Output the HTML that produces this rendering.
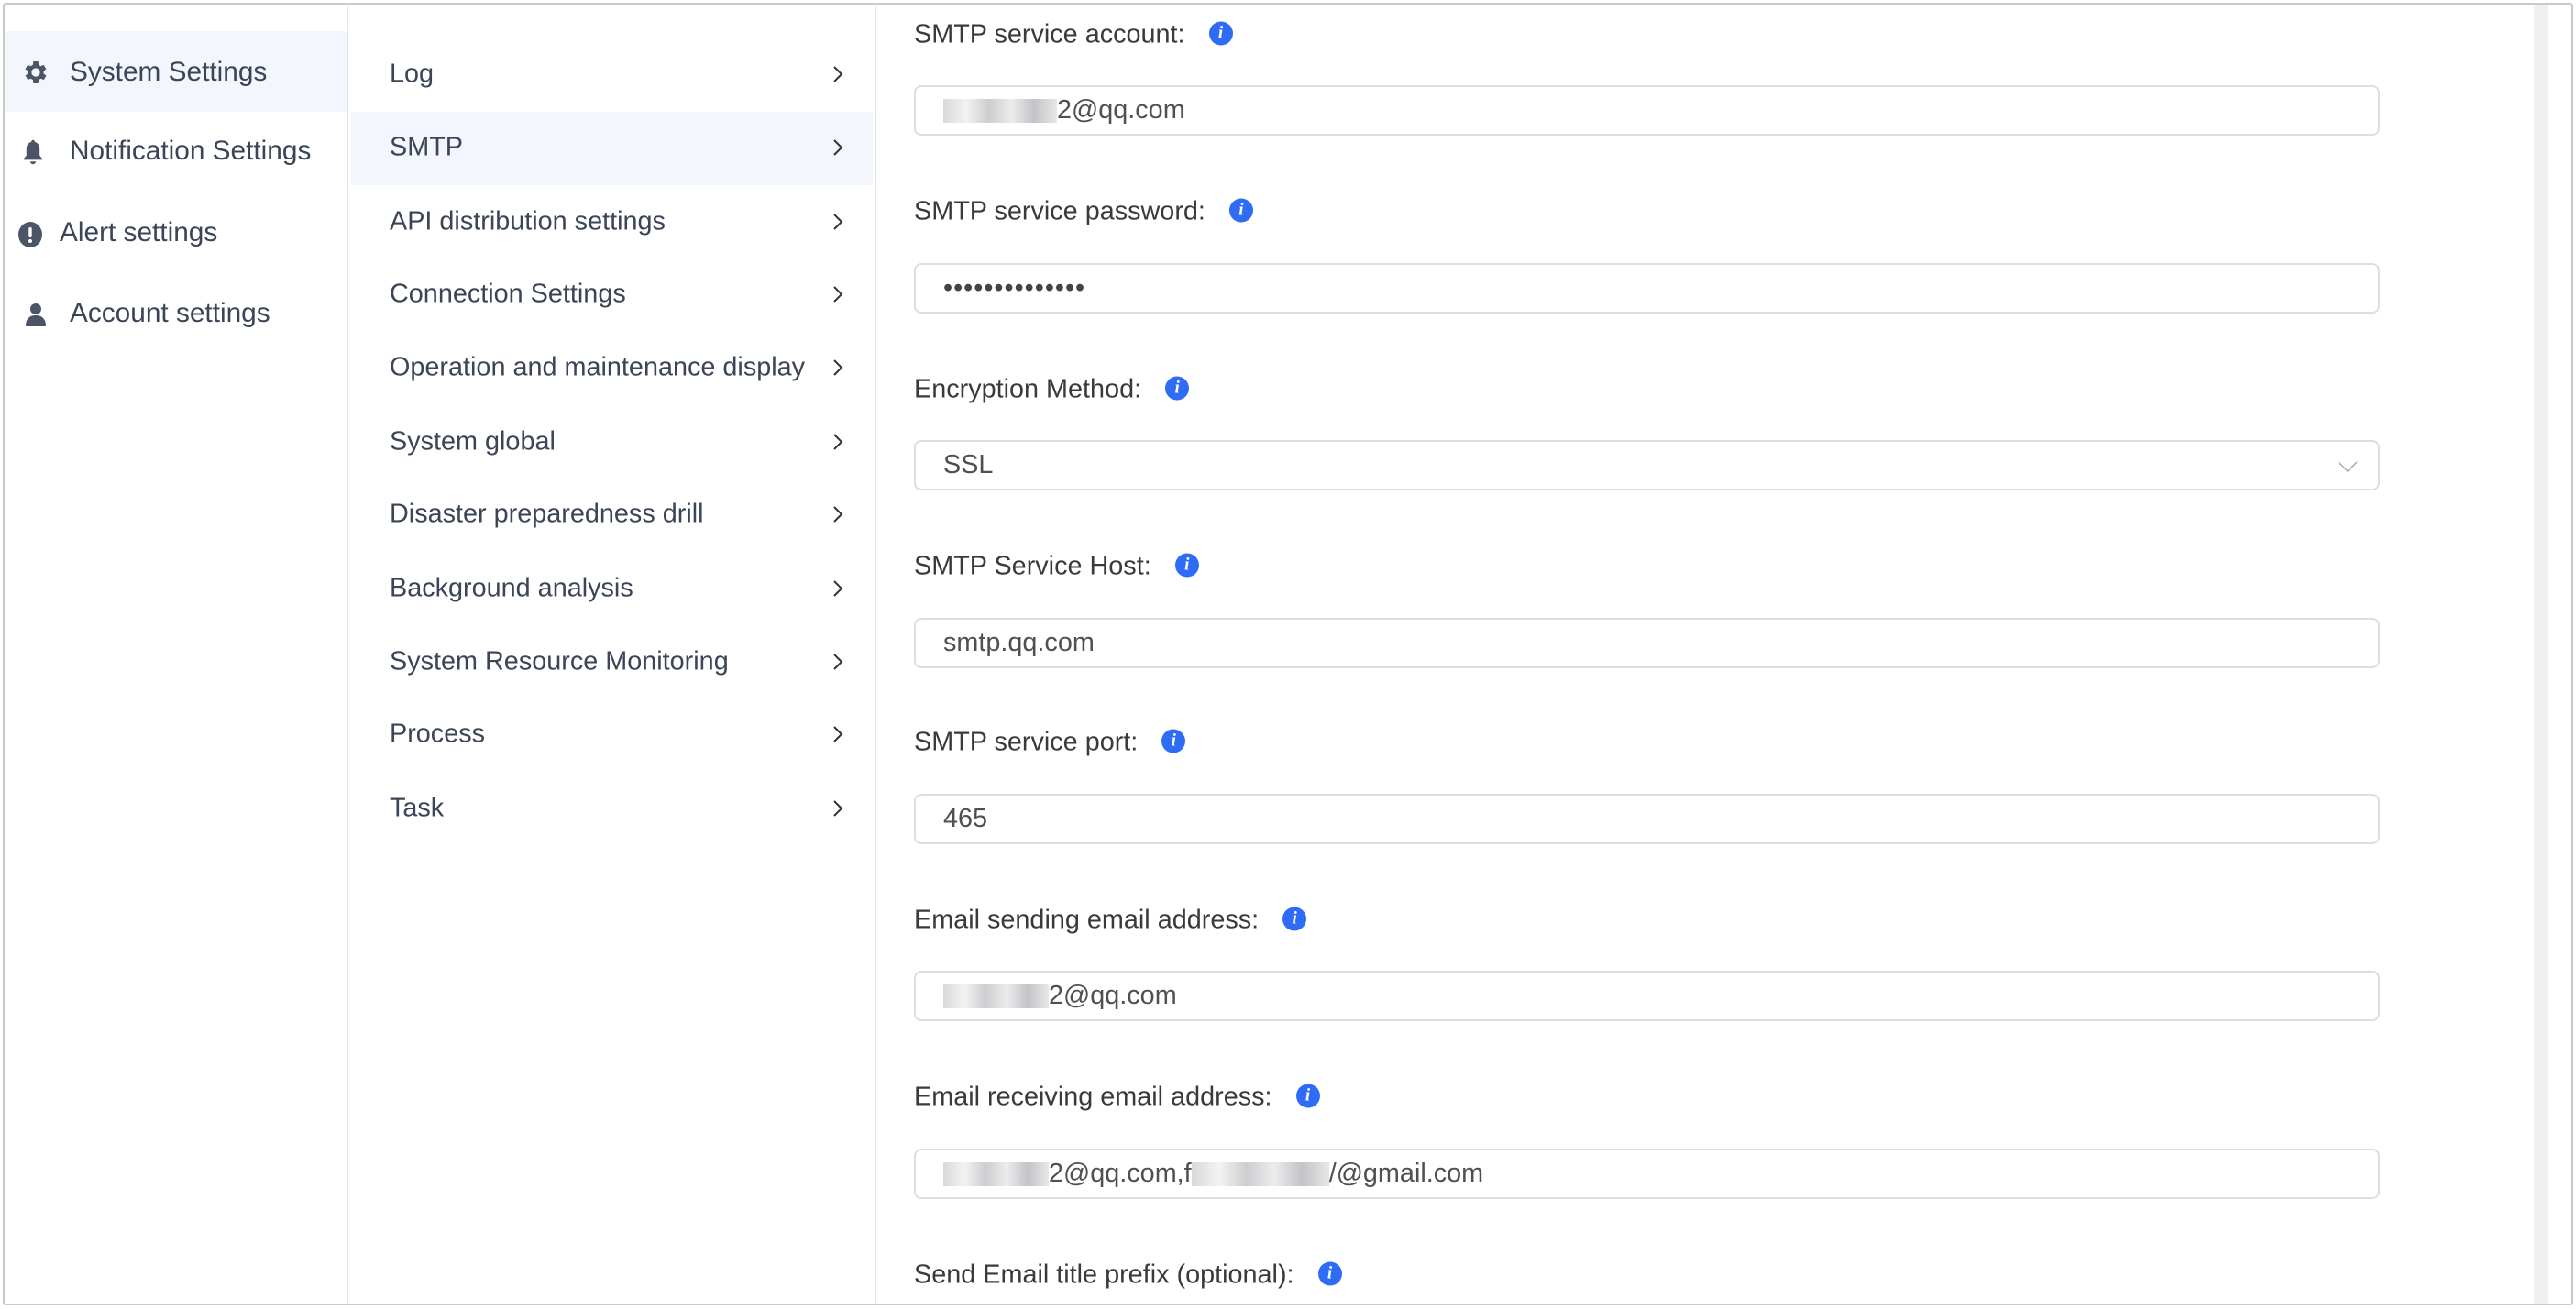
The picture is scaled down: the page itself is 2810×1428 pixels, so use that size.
<!DOCTYPE html>
<html><head><meta charset="utf-8"><style>
*{margin:0;padding:0;box-sizing:border-box}
body{width:2810px;height:1428px;background:#fff;font-family:"Liberation Sans",sans-serif;position:relative;overflow:hidden}
.frame{position:absolute;left:3px;top:3px;width:2804px;height:1421px;border:2px solid #c9c9c9;border-radius:3px}
.vl{position:absolute;top:4px;bottom:5px;width:2px;background:#e6e6ea}
.side{position:absolute;left:76px;font-size:29.8px;color:#3b4557;transform:translateY(-50%)}
.ico{position:absolute;transform:translate(-50%,-50%)}
.mi{position:absolute;left:425px;font-size:28.8px;color:#3b4557;transform:translateY(-50%)}
.chev{position:absolute;left:908px;transform:translateY(-50%)}
.lab{position:absolute;left:997px;font-size:28.8px;color:#3a3a3a;transform:translateY(-50%);white-space:nowrap}
.info{display:inline-block;width:26px;height:26px;border-radius:50%;background:#2f6cf6;color:#fff;font:italic bold 19px "Liberation Serif",serif;text-align:center;line-height:26px;margin-left:26px;vertical-align:middle;position:relative;top:-2px}
.inp{position:absolute;left:997px;width:1599px;height:55px;border:2px solid #dddde2;border-radius:8px;font-size:28.8px;color:#505050;padding-left:30px;line-height:51px;white-space:nowrap}
.blur{display:inline-block;height:26px;background:linear-gradient(90deg,#c8c8cc,#eee 20%,#b8b8bc 40%,#e4e4e6 60%,#aaaab0 80%,#ddd);vertical-align:middle;opacity:.7}
</style></head><body>
<div class="frame"></div>
<div style="position:absolute;left:5px;top:34px;width:373px;height:88px;background:#f3f6fd"></div>
<div style="position:absolute;left:383px;top:122px;width:569px;height:80px;background:#f3f6fd"></div>
<div class="vl" style="left:378px"></div>
<div class="vl" style="left:954px"></div>
<div style="position:absolute;left:2764px;top:5px;width:16px;height:1418px;background:#f0f0f0"></div>

<svg class="ico" style="left:39px;top:79px" width="32" height="32" viewBox="0 0 24 24"><path fill="#4b5567" d="M19.4 13a7.5 7.5 0 0 0 0-2l2.1-1.6-2-3.5-2.5 1a7 7 0 0 0-1.7-1L15 3h-4l-.4 2.9a7 7 0 0 0-1.7 1l-2.5-1-2 3.5L6.6 11a7.5 7.5 0 0 0 0 2l-2.1 1.6 2 3.5 2.5-1a7 7 0 0 0 1.7 1L11 21h4l.4-2.9a7 7 0 0 0 1.7-1l2.5 1 2-3.5zM13 15.5A3.5 3.5 0 1 1 13 8.5a3.5 3.5 0 0 1 0 7z" transform="translate(-1 0)"/></svg>
<div class="side" style="top:79px">System Settings</div>
<svg class="ico" style="left:36px;top:166px" width="24" height="30" viewBox="0 0 20 24"><path fill="#4b5567" d="M10 1c1 0 1.5.8 1.5 1.6C14.5 3.4 16 6 16 9v6l2.5 3v1h-17v-1L4 15V9c0-3 1.5-5.6 4.5-6.4C8.5 1.8 9 1 10 1zM7.5 20.5h5a2.5 2.5 0 0 1-5 0z"/></svg>
<div class="side" style="top:165px">Notification Settings</div>
<svg class="ico" style="left:33px;top:256px" width="28" height="30" viewBox="0 0 28 30"><ellipse cx="14" cy="15" rx="13" ry="14" fill="#4b5567"/><rect x="12.3" y="7" width="3.4" height="11" rx="1.5" fill="#fff"/><circle cx="14" cy="22" r="2" fill="#fff"/></svg>
<div class="side" style="top:254px;left:65px">Alert settings</div>
<svg class="ico" style="left:39px;top:344px" width="24" height="28" viewBox="0 0 24 28"><circle cx="12" cy="7" r="6" fill="#4b5567"/><path d="M1 26c0-8 4-12 11-12s11 4 11 12z" fill="#4b5567"/></svg>
<div class="side" style="top:342px">Account settings</div>

<div class="mi" style="top:81px">Log</div>
<div class="mi" style="top:161px">SMTP</div>
<div class="mi" style="top:242px">API distribution settings</div>
<div class="mi" style="top:321px">Connection Settings</div>
<div class="mi" style="top:401px">Operation and maintenance display</div>
<div class="mi" style="top:482px">System global</div>
<div class="mi" style="top:561px">Disaster preparedness drill</div>
<div class="mi" style="top:642px">Background analysis</div>
<div class="mi" style="top:722px">System Resource Monitoring</div>
<div class="mi" style="top:801px">Process</div>
<div class="mi" style="top:882px">Task</div>
<svg width="0" height="0" style="position:absolute"><defs><path id="c" d="M2 2l8 8-8 8" fill="none" stroke="#333" stroke-width="2"/></defs></svg>
<svg class="chev" style="top:81px" width="14" height="20"><use href="#c"/></svg>
<svg class="chev" style="top:161px" width="14" height="20"><use href="#c"/></svg>
<svg class="chev" style="top:242px" width="14" height="20"><use href="#c"/></svg>
<svg class="chev" style="top:321px" width="14" height="20"><use href="#c"/></svg>
<svg class="chev" style="top:401px" width="14" height="20"><use href="#c"/></svg>
<svg class="chev" style="top:482px" width="14" height="20"><use href="#c"/></svg>
<svg class="chev" style="top:561px" width="14" height="20"><use href="#c"/></svg>
<svg class="chev" style="top:642px" width="14" height="20"><use href="#c"/></svg>
<svg class="chev" style="top:722px" width="14" height="20"><use href="#c"/></svg>
<svg class="chev" style="top:801px" width="14" height="20"><use href="#c"/></svg>
<svg class="chev" style="top:882px" width="14" height="20"><use href="#c"/></svg>

<div class="lab" style="top:38px">SMTP service account:<span class="info">i</span></div>
<div class="inp" style="top:93px"><span class="blur" style="width:124px"></span>2@qq.com</div>
<div class="lab" style="top:231px">SMTP service password:<span class="info">i</span></div>
<div class="inp" style="top:287px;letter-spacing:1px;color:#444">••••••••••••••</div>
<div class="lab" style="top:425px">Encryption Method:<span class="info">i</span></div>
<div class="inp" style="top:480px">SSL<svg style="position:absolute;right:22px;top:20px" width="22" height="14"><path d="M1 2l10 10 10-10" fill="none" stroke="#aaa" stroke-width="1.5"/></svg></div>
<div class="lab" style="top:618px">SMTP Service Host:<span class="info">i</span></div>
<div class="inp" style="top:674px">smtp.qq.com</div>
<div class="lab" style="top:810px">SMTP service port:<span class="info">i</span></div>
<div class="inp" style="top:866px">465</div>
<div class="lab" style="top:1004px">Email sending email address:<span class="info">i</span></div>
<div class="inp" style="top:1059px"><span class="blur" style="width:115px"></span>2@qq.com</div>
<div class="lab" style="top:1197px">Email receiving email address:<span class="info">i</span></div>
<div class="inp" style="top:1253px"><span class="blur" style="width:115px"></span>2@qq.com,f<span class="blur" style="width:150px"></span>/@gmail.com</div>
<div class="lab" style="top:1391px">Send Email title prefix (optional):<span class="info">i</span></div>
</body></html>
